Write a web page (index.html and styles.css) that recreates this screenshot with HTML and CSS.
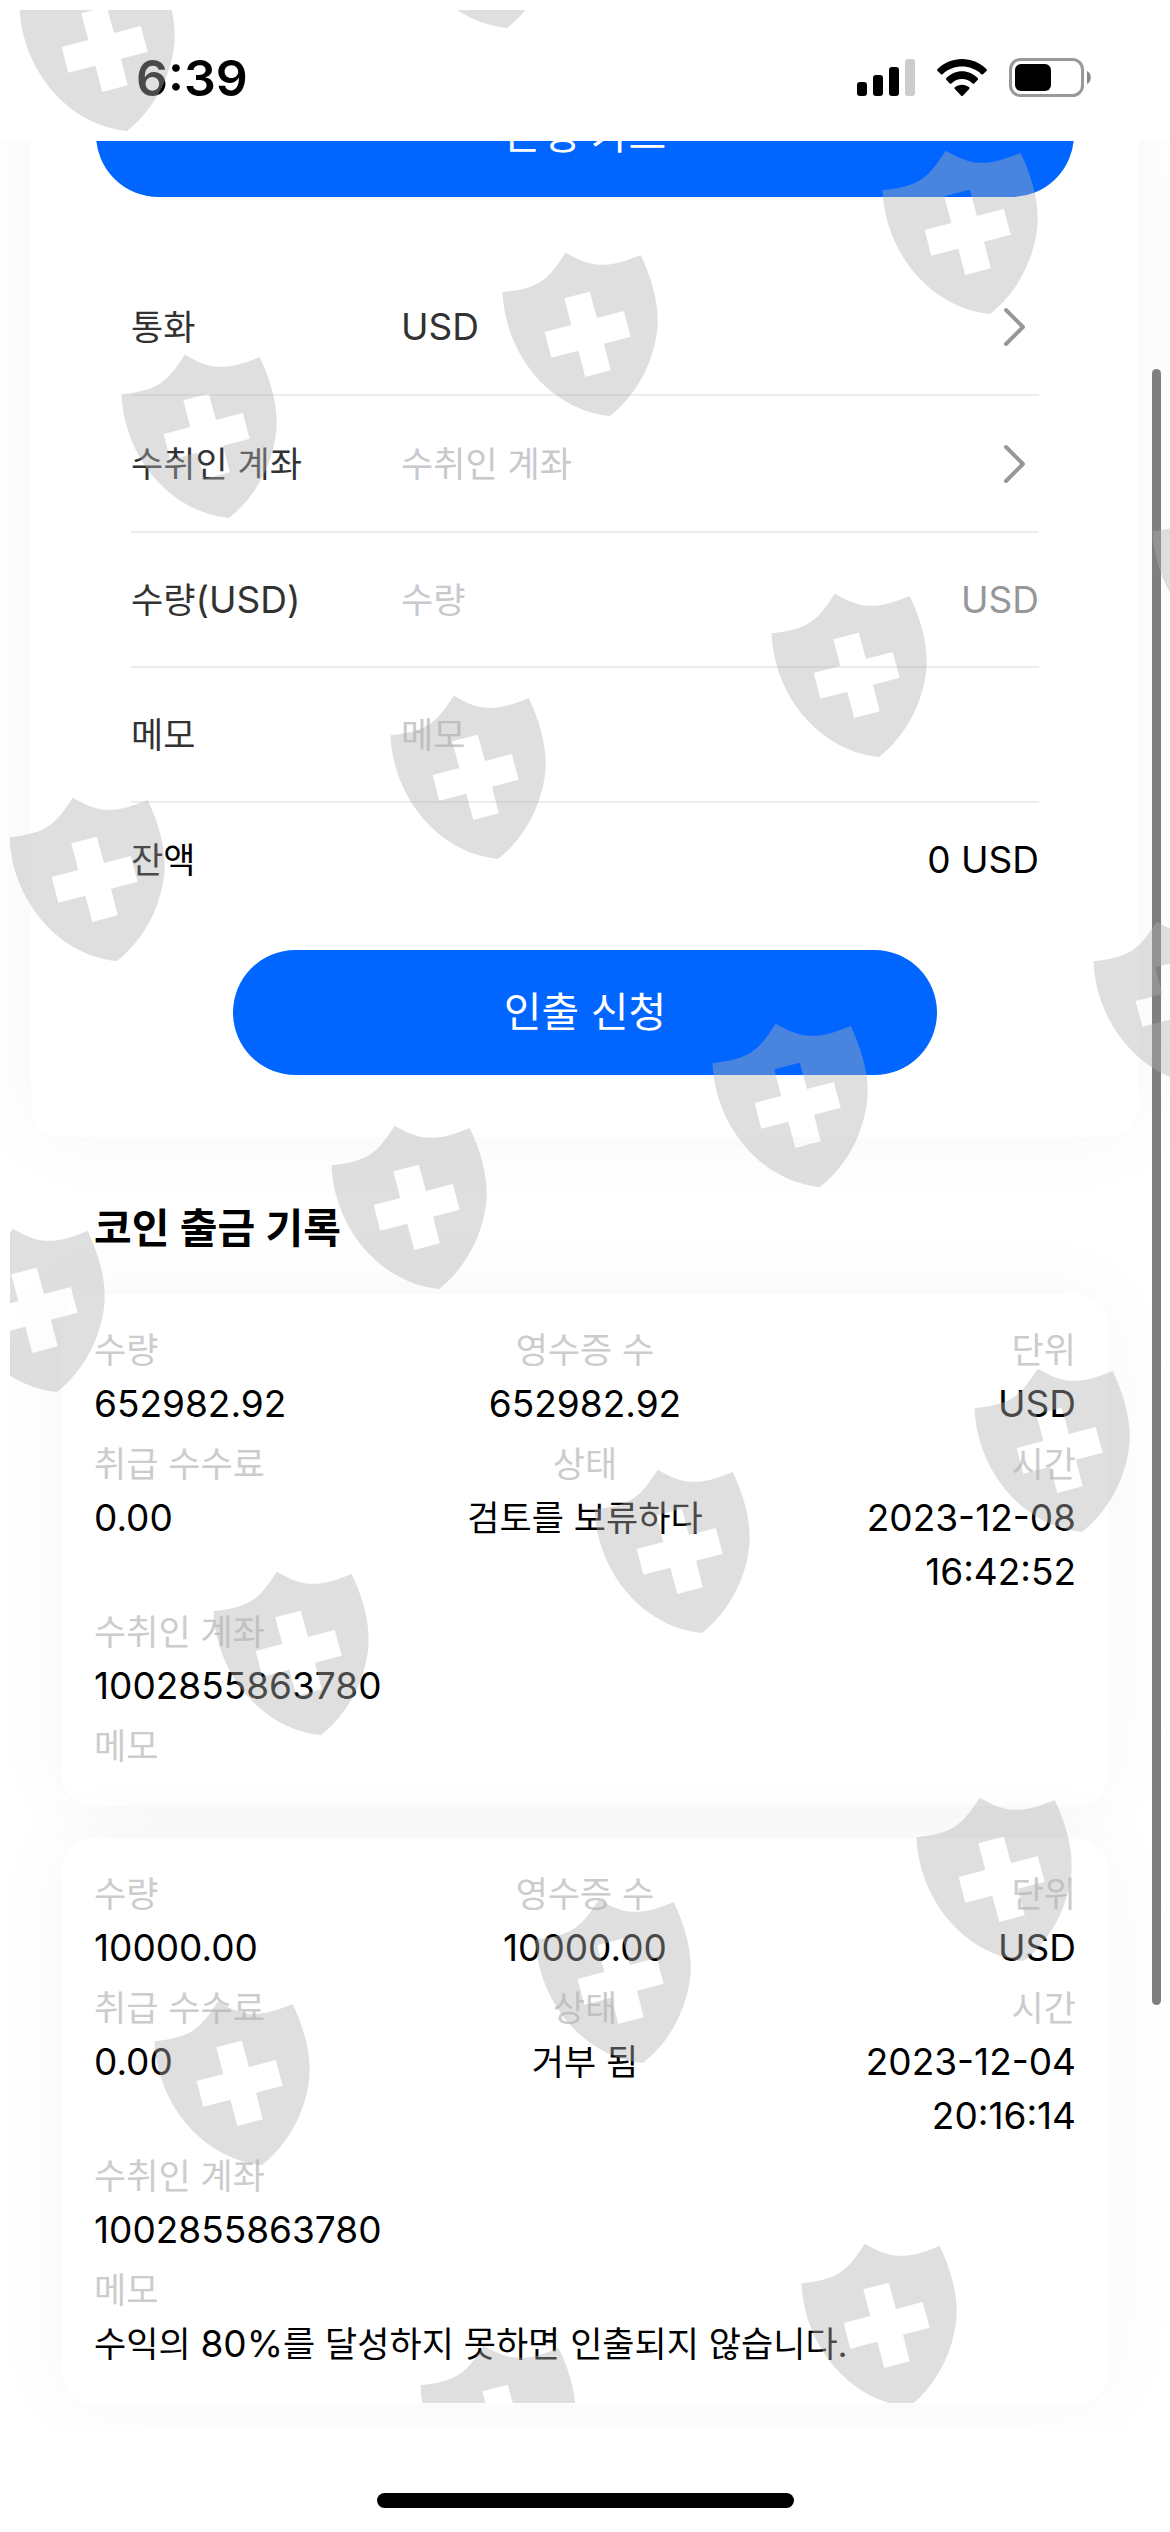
FILE: index.html
```html
<!DOCTYPE html>
<html lang="ko">
<head>
    <meta charset="UTF-8">
    <meta name="viewport" content="width=device-width, initial-scale=1">
    <title>인출 신청</title>
    <link rel="stylesheet" href="styles.css">
</head>
<body>
<header class="status">
    <span class="status-time">6:39</span>
    <div class="status-icons">
        <svg width="58" height="38" viewBox="0 0 58 38">
            <rect x="0" y="23" width="10" height="14" rx="3"/>
            <rect x="16" y="16" width="10" height="21" rx="3"/>
            <rect x="32" y="8" width="10" height="29" rx="3"/>
            <rect x="48" y="0" width="10" height="37" rx="3" fill="#ccc"/>
        </svg>
        <svg width="50" height="38" viewBox="0 0 50 38">
            <path d="M.4 10.2C14-3.4 36-3.4 49.6 10.2q.8.8 0 1.6L46 15.2q-.8.7-1.6 0C33.500 5 16.500 5 5.600 15.200q-.8.7-1.600 0L.4 11.800q-.8-.8 0-1.600z"/>
            <path d="M9.200 19.200C18 10 32 10 40.800 19.200q.8.8 0 1.600l-3.600 3.600q-.8.7-1.600 0C29.500 18.500 20.500 18.500 14.400 24.400q-.8.7-1.600 0L9.200 20.800q-.8-.8 0-1.600z"/>
            <path d="M17.800 28.300c4-3.500 10.400-3.500 14.400 0q.8.8 0 1.600l-6.400 6.800q-.8.8-1.600 0l-6.400-6.800q-.8-.8 0-1.600z"/>
        </svg>
        <svg width="82" height="39" viewBox="0 0 82 39">
            <rect x="1.500" y="1.500" width="72" height="36" rx="10" fill="none" stroke="#999" stroke-width="3"/>
            <rect x="6" y="6" width="36" height="27" rx="6"/>
            <path d="M78 13c5 2 5 11 0 13z" fill="#888"/>
        </svg>
    </div>
</header>

<main class="content">
    <form class="card">
        <button type="button" class="btn">은행 카드</button>
        <div class="fields">
            <div class="field field-link">
                <label for="currency">통화</label>
                <input id="currency" class="num" type="text" value="USD" readonly>
                <svg class="arrow" width="22" height="40" viewBox="0 0 22 40"><path d="M3 3l17 17L3 37"/></svg>
            </div>
            <div class="field field-link">
                <label for="account">수취인 계좌</label>
                <input id="account" type="text" placeholder="수취인 계좌" readonly>
                <svg class="arrow" width="22" height="40" viewBox="0 0 22 40"><path d="M3 3l17 17L3 37"/></svg>
            </div>
            <div class="field">
                <label for="amount">수량<span class="num">(USD)</span></label>
                <input id="amount" type="text" placeholder="수량">
                <span class="unit num">USD</span>
            </div>
            <div class="field">
                <label for="memo">메모</label>
                <input id="memo" type="text" placeholder="메모">
            </div>
            <div class="balance">
                <span>잔액</span>
                <span class="num">0 USD</span>
            </div>
        </div>
        <button type="submit" class="btn btn-submit">인출 신청</button>
    </form>

    <h2 class="title">코인 출금 기록</h2>

    <section class="records">
        <dl class="record">
            <div><dt>수량</dt><dd class="num">652982.92</dd></div>
            <div><dt>영수증 수</dt><dd class="num">652982.92</dd></div>
            <div><dt>단위</dt><dd class="num">USD</dd></div>
            <div><dt>취급 수수료</dt><dd class="num">0.00</dd></div>
            <div><dt>상태</dt><dd>검토를 보류하다</dd></div>
            <div><dt>시간</dt><dd class="num">2023-12-08 16:42:52</dd></div>
            <div class="wide"><dt>수취인 계좌</dt><dd class="num">1002855863780</dd></div>
            <div class="wide"><dt>메모</dt><dd></dd></div>
        </dl>
        <dl class="record">
            <div><dt>수량</dt><dd class="num">10000.00</dd></div>
            <div><dt>영수증 수</dt><dd class="num">10000.00</dd></div>
            <div><dt>단위</dt><dd class="num">USD</dd></div>
            <div><dt>취급 수수료</dt><dd class="num">0.00</dd></div>
            <div><dt>상태</dt><dd>거부 됨</dd></div>
            <div><dt>시간</dt><dd class="num">2023-12-04 20:16:14</dd></div>
            <div class="wide"><dt>수취인 계좌</dt><dd class="num">1002855863780</dd></div>
            <div class="wide"><dt>메모</dt><dd>수익의 <span class="num">80%</span>를 달성하지 못하면 인출되지 않습니다.</dd></div>
        </dl>
    </section>
</main>

<footer class="home"><div class="home-bar"></div></footer>

<div class="scrollbar"></div>

<!-- shield watermark over the whole screen -->
<svg class="watermark" viewBox="10 10 1160 2393" preserveAspectRatio="xMinYMin slice" aria-hidden="true">
    <defs>
        <path id="shield" fill-rule="evenodd" d="M.5 40.300C38 36 46 28 63.700.7 90 16 105 17 138.700 3c10.300 22 17 44 17 66S145 135 108 164C48 158 3 102 .5 40.300zM62.300 46.300L69.300 73 42.700 80l6.600 25.700 27-7 7 26.300 25.400-6.700-6.700-26.600 26.700-7L121.700 59 95 66 87.700 39.700z"/>
    </defs>
    <use href="#shield" x="19" y="-33"/>
    <use href="#shield" x="399" y="-136"/>
    <use href="#shield" x="882" y="150"/>
    <use href="#shield" x="502" y="252"/>
    <use href="#shield" x="121" y="354"/>
    <use href="#shield" x="1152" y="491"/>
    <use href="#shield" x="771" y="593"/>
    <use href="#shield" x="390" y="695"/>
    <use href="#shield" x="9" y="797"/>
    <use href="#shield" x="1093" y="921"/>
    <use href="#shield" x="712" y="1023"/>
    <use href="#shield" x="331" y="1125"/>
    <use href="#shield" x="-51" y="1228"/>
    <use href="#shield" x="974" y="1368"/>
    <use href="#shield" x="594" y="1469"/>
    <use href="#shield" x="213" y="1571"/>
    <use href="#shield" x="916" y="1797"/>
    <use href="#shield" x="535" y="1899"/>
    <use href="#shield" x="154" y="2001"/>
    <use href="#shield" x="801" y="2243"/>
    <use href="#shield" x="420" y="2345"/>
</svg>
</body>
</html>
```
FILE: styles.css
```css
* {
    box-sizing: border-box;
}

body {
    position: relative;
    display: flex;
    flex-direction: column;
    min-height: 100vh;
    margin: 0;
    background: #fff;
    color: #000;
    font-family: Inter, "Noto Sans CJK KR", sans-serif;
    font-size: 35px;
    line-height: 54px;
    overflow-x: hidden;
}

.status {
    display: flex;
    align-items: center;
    justify-content: space-between;
    height: 141px;
    padding: 14px 79px 0 136px;
}

.status-time {
    font-size: 50px;
    font-weight: 600;
}

.status-icons {
    display: flex;
    align-items: center;
    gap: 22px;
}

.content {
    flex: 1;
    overflow: hidden;
}

/* scrolled: the first button is partly under the status bar */
.card {
    margin: -69px 31px 0;
    padding: 0 65px 62px;
    background: #fff;
    border-radius: 31px;
    box-shadow: 0 0 90px rgba(0, 0, 0, .04);
}

.btn {
    display: block;
    width: 100%;
    height: 125px;
    padding: 0 0 8px;
    border: 0;
    border-radius: 63px;
    background: #06f;
    color: #fff;
    font-family: inherit;
    font-size: 41px;
}

.btn-submit {
    width: 72%;
    margin: 0 auto;
}

.fields {
    padding: 62px 35px 63px;
}

.field {
    display: flex;
    align-items: center;
    height: 135px;
    border-bottom: 2px solid #ebedf0;
    color: #323233;
}

.field-link {
    height: 137px;
}

.field label {
    width: 270px;
}

.field input {
    flex: 1;
    min-width: 0;
    padding: 0;
    border: 0;
    outline: none;
    background: none;
    color: inherit;
    font: inherit;
}

.field input::placeholder {
    color: #c8c9cc;
    opacity: 1;
}

.num,
.field .num {
    font-size: 37px;
}

.arrow {
    margin-right: 14px;
    fill: none;
    stroke: #969799;
    stroke-width: 4;
    stroke-linecap: round;
    stroke-linejoin: round;
}

.unit {
    color: #969799;
}

.balance {
    display: flex;
    justify-content: space-between;
    margin-top: 30px;
}

.title {
    margin: 61px 94px 36px;
    font-size: 41px;
    font-weight: 600;
    line-height: 60px;
}

.records {
    display: flex;
    flex-direction: column;
    gap: 32px;
    padding: 0 62px;
}

.record {
    display: grid;
    grid-template-columns: repeat(3, 1fr);
    row-gap: 6px;
    margin: 0;
    padding: 29px 32px 33px;
    background: #fff;
    border-radius: 31px;
    box-shadow: 0 0 90px rgba(0, 0, 0, .04);
}

.record div:nth-child(3n + 2) {
    text-align: center;
}

.record div:nth-child(3n) {
    padding-left: 30px;
    text-align: right;
}

.record .wide:nth-child(n) {
    grid-column: 1 / -1;
    padding-left: 0;
    text-align: left;
}

.record dt {
    color: #ccc;
}

.record dd {
    margin: 0;
}

.home {
    display: flex;
    align-items: flex-end;
    justify-content: center;
    height: 101px;
    padding-bottom: 24px;
}

.home-bar {
    width: 417px;
    height: 15px;
    border-radius: 8px;
    background: #000;
}

.scrollbar {
    position: absolute;
    top: 369px;
    right: 9px;
    width: 9px;
    height: 1636px;
    border-radius: 5px;
    background: #7f7f7f;
}

.watermark {
    position: absolute;
    top: 10px;
    left: 10px;
    width: calc(100% - 10px);
    height: calc(100% - 139px);
    fill: rgba(178, 178, 178, .41);
    pointer-events: none;
}
```
